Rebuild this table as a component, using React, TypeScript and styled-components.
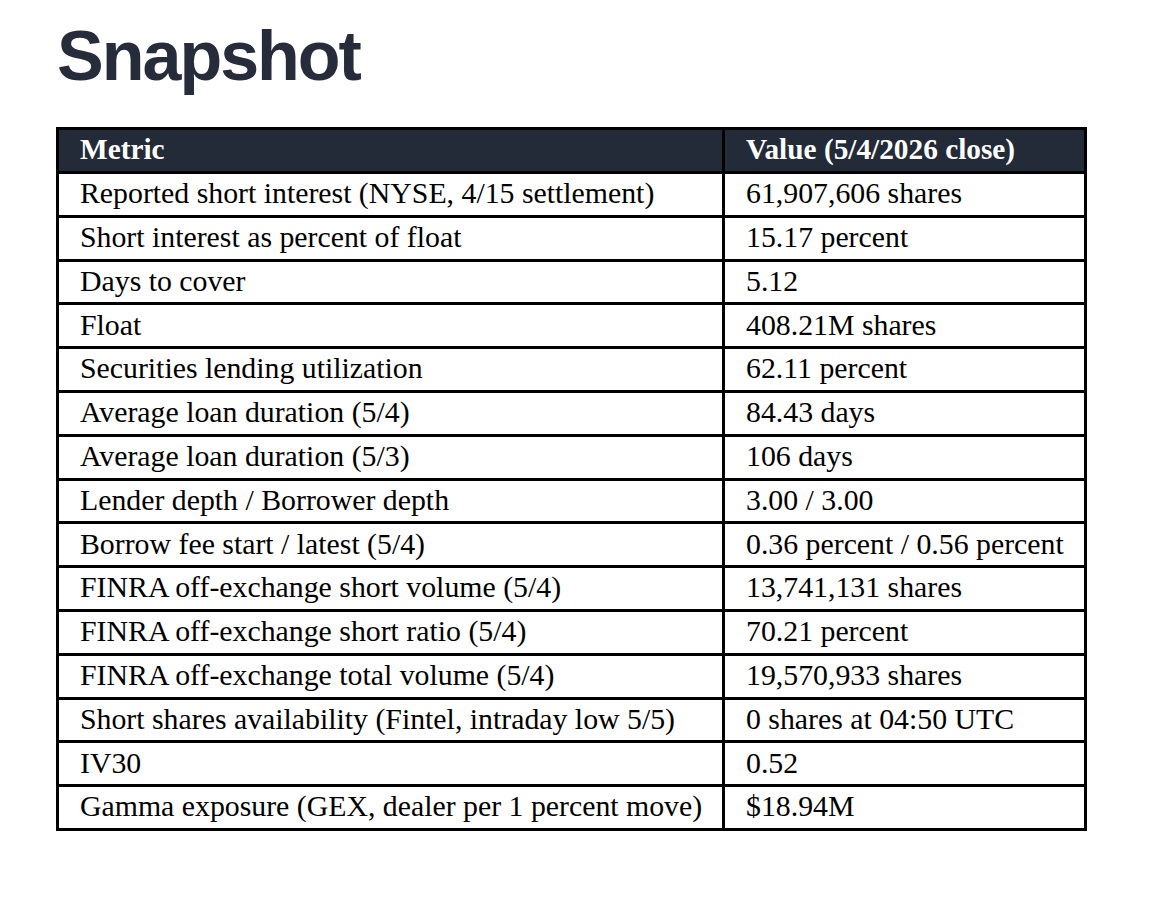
import styled, { createGlobalStyle } from 'styled-components';

const GlobalStyle = createGlobalStyle`
  html, body {
    margin: 0;
    padding: 0;
    background: #ffffff;
  }
`;

interface IRow {
  metric: string,
  value: string,
};

const rows: IRow[] = [
  { metric: 'Reported short interest (NYSE, 4/15 settlement)', value: '61,907,606 shares' },
  { metric: 'Short interest as percent of float', value: '15.17 percent' },
  { metric: 'Days to cover', value: '5.12' },
  { metric: 'Float', value: '408.21M shares' },
  { metric: 'Securities lending utilization', value: '62.11 percent' },
  { metric: 'Average loan duration (5/4)', value: '84.43 days' },
  { metric: 'Average loan duration (5/3)', value: '106 days' },
  { metric: 'Lender depth / Borrower depth', value: '3.00 / 3.00' },
  { metric: 'Borrow fee start / latest (5/4)', value: '0.36 percent / 0.56 percent' },
  { metric: 'FINRA off-exchange short volume (5/4)', value: '13,741,131 shares' },
  { metric: 'FINRA off-exchange short ratio (5/4)', value: '70.21 percent' },
  { metric: 'FINRA off-exchange total volume (5/4)', value: '19,570,933 shares' },
  { metric: 'Short shares availability (Fintel, intraday low 5/5)', value: '0 shares at 04:50 UTC' },
  { metric: 'IV30', value: '0.52' },
  { metric: 'Gamma exposure (GEX, dealer per 1 percent move)', value: '$18.94M' },
];

const App = () => {
  return (
    <Page>
      <GlobalStyle />
      <Title>Snapshot</Title>
      <Table>
        <colgroup>
          <col style={{ width: 666 }} />
          <col style={{ width: 362 }} />
        </colgroup>
        <thead>
          <HeadRow>
            <HeadCell>Metric</HeadCell>
            <HeadCell>Value (5/4/2026 close)</HeadCell>
          </HeadRow>
        </thead>
        <tbody>
          {rows.map((row) => (
            <BodyRow key={row.metric}>
              <Cell>{row.metric}</Cell>
              <Cell>{row.value}</Cell>
            </BodyRow>
          ))}
        </tbody>
      </Table>
    </Page>
  );
}

const Page = styled.div`
  padding: 21px 0 0 57px;
  min-height: 924px;
  box-sizing: border-box;
`

const Title = styled.h1`
  margin: 0 0 36px 0;
  font-family: "Liberation Sans", Arial, sans-serif;
  font-weight: bold;
  font-size: 70px;
  line-height: 1;
  letter-spacing: -2px;
  color: #262c3a;
`

const Table = styled.table`
  border-collapse: collapse;
  table-layout: fixed;
  width: 1028px;
  margin-left: -1px;
  border: 3px solid #000;
  font-family: "Liberation Serif", "Times New Roman", serif;
  color: #000;
`

const HeadRow = styled.tr`
  height: 44px;
  background: #232a38;
`

const HeadCell = styled.th`
  text-align: left;
  padding: 0 0 1px 21px;
  font-size: 29.3px;
  font-weight: bold;
  line-height: 1.15;
  color: #ffffff;
  border: 3px solid #000;
  white-space: nowrap;
`

const BodyRow = styled.tr`
  height: 43.8px;
`

const Cell = styled.td`
  padding: 0 0 2px 21px;
  font-size: 29.8px;
  line-height: 1.15;
  border: 3px solid #000;
  vertical-align: middle;
  white-space: nowrap;
`

export default App;
